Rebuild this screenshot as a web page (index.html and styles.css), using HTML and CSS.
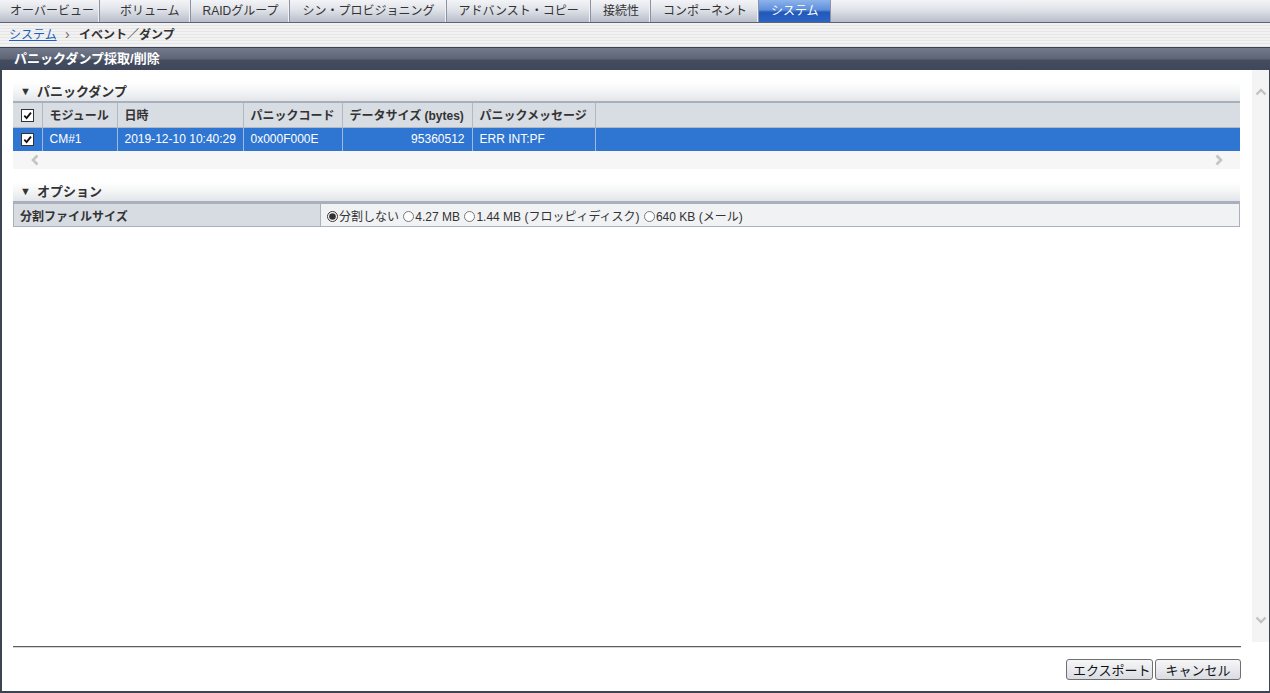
FILE: index.html
```html
<!DOCTYPE html>
<html lang="ja">
  <head>
    <meta charset="UTF-8" />
    <title>パニックダンプ採取/削除</title>
    <link rel="stylesheet" href="styles.css">
  </head>
  <body>
    <div class="tabs">
      <div class="tab">オーバービュー</div>
      <div class="tab">ボリューム</div>
      <div class="tab">RAIDグループ</div>
      <div class="tab">シン・プロビジョニング</div>
      <div class="tab">アドバンスト・コピー</div>
      <div class="tab">接続性</div>
      <div class="tab">コンポーネント</div>
      <div class="tab active">システム</div>
    </div>

    <div class="crumbs">
      <a href="#">システム</a>
      <span class="crumb-sep">›</span>
      <strong>イベント／ダンプ</strong>
    </div>

    <div class="panel">
      <div class="panel-title">パニックダンプ採取/削除</div>
      <div class="panel-body">
        <div class="scroll-area">
          <div class="content">
            <div class="section-head"><span class="tri">▼</span>パニックダンプ</div>
            <table class="dump-table">
              <colgroup>
                <col class="c-check" />
                <col class="c-module" />
                <col class="c-date" />
                <col class="c-code" />
                <col class="c-size" />
                <col class="c-msg" />
                <col />
              </colgroup>
              <thead>
                <tr>
                  <th><span class="check"><svg viewBox="0 0 12 12"><path d="M2.5 6.2 L5 8.8 L9.8 2.8" /></svg></span></th>
                  <th>モジュール</th>
                  <th>日時</th>
                  <th>パニックコード</th>
                  <th>データサイズ (bytes)</th>
                  <th>パニックメッセージ</th>
                  <th></th>
                </tr>
              </thead>
              <tbody>
                <tr class="selected">
                  <td><span class="check"><svg viewBox="0 0 12 12"><path d="M2.5 6.2 L5 8.8 L9.8 2.8" /></svg></span></td>
                  <td>CM#1</td>
                  <td>2019-12-10 10:40:29</td>
                  <td>0x000F000E</td>
                  <td class="num">95360512</td>
                  <td>ERR INT:PF</td>
                  <td></td>
                </tr>
              </tbody>
            </table>
            <div class="hscroll">
              <svg class="chev" viewBox="0 0 10 12"><path d="M7.5 1.5 L3 6 L7.5 10.5" /></svg>
              <svg class="chev" viewBox="0 0 10 12"><path d="M2.5 1.5 L7 6 L2.5 10.5" /></svg>
            </div>

            <div class="section-head option-head"><span class="tri">▼</span>オプション</div>
            <table class="opt-table">
              <tr>
                <th>分割ファイルサイズ</th>
                <td>
                  <label><input type="radio" name="split" checked />分割しない</label>
                  <label><input type="radio" name="split" />4.27 MB</label>
                  <label><input type="radio" name="split" />1.44 MB (フロッピィディスク)</label>
                  <label><input type="radio" name="split" />640 KB (メール)</label>
                </td>
              </tr>
            </table>
          </div>
          <div class="vscroll">
            <svg class="vchev" viewBox="0 0 12 10"><path d="M1.5 7.5 L6 3 L10.5 7.5" /></svg>
            <svg class="vchev" viewBox="0 0 12 10"><path d="M1.5 2.5 L6 7 L10.5 2.5" /></svg>
          </div>
        </div>
        <div class="footer">
          <div class="rule"></div>
          <div class="actions">
            <button class="btn btn-export">エクスポート</button>
            <button class="btn">キャンセル</button>
          </div>
        </div>
      </div>
    </div>
  </body>
</html>
```

FILE: styles.css
```css
* {
  margin: 0;
  padding: 0;
  box-sizing: border-box;
}

body {
  font-family: "Liberation Sans", "Noto Sans CJK JP", sans-serif;
  font-size: 12px;
  color: #333;
  background: #fff;
  height: 693px;
  display: flex;
  flex-direction: column;
  overflow: hidden;
}

/* top navigation tabs */
.tabs {
  display: flex;
  height: 23px;
  background: linear-gradient(to bottom, #f3f4f7, #dfe2e8 45%, #b8bdca);
  border-bottom: 1px solid #5d6473;
}

.tab {
  padding: 0 11px 0 12px;
  line-height: 22px;
  font-size: 12px;
  color: #333;
  border-right: 1px solid #8d93a0;
  box-shadow: inset -1px 0 0 #eef0f4;
  white-space: nowrap;
}

.tab:first-child {
  padding: 0 5px 0 10px;
}

.tab:nth-child(2) {
  padding: 0 10px 0 20px;
}

.tab.active {
  background: linear-gradient(to bottom, #8db3ea, #5d8fdb 45%, #2359b8 55%, #2a64c4);
  color: #fff;
  box-shadow: none;
  border-right: 1px solid #8d93a0;
}

/* breadcrumb */
.crumbs {
  height: 24px;
  line-height: 23px;
  padding-left: 9px;
  font-size: 12px;
  background: repeating-linear-gradient(to bottom, #f2f2f2 0, #f2f2f2 2px, #e6e6e6 2px, #e6e6e6 3px);
}

.crumbs a {
  color: #1f5fc0;
  text-decoration: underline;
}

.crumb-sep {
  color: #666;
  margin: 0 6px 0 5px;
  font-size: 14px;
}

.crumbs strong {
  color: #333;
}

/* panel */
.panel {
  flex: 1;
  display: flex;
  flex-direction: column;
  min-height: 0;
}

.panel-title {
  height: 23px;
  line-height: 22px;
  padding-left: 14px;
  color: #fff;
  font-weight: bold;
  font-size: 13px;
  border-top: 1px solid #3a4150;
  background: linear-gradient(to bottom, #727a8b, #5c6476 50%, #444c5f 55%, #3f475a);
}

.panel-body {
  flex: 1;
  display: flex;
  flex-direction: column;
  border-left: 2px solid #3c4352;
  border-right: 1px solid #3c4352;
  border-bottom: 2px solid #3c4352;
  min-height: 0;
}

.scroll-area {
  height: 572px;
  display: flex;
}

.content {
  flex: 1;
  padding: 12px 12px 0 11px;
}

.vscroll {
  width: 17px;
  background: #f4f4f4;
  display: flex;
  flex-direction: column;
  justify-content: space-between;
  align-items: center;
  padding: 17px 0 17px;
}

.vchev {
  width: 12px;
  height: 10px;
  fill: none;
  stroke: #c2c2c2;
  stroke-width: 2.4;
}

/* section headings */
.section-head {
  height: 21px;
  line-height: 19px;
  padding-left: 7px;
  font-size: 13px;
  font-weight: bold;
  color: #333;
  background: linear-gradient(to bottom, #ffffff, #f6f7f8 40%, #e3e5e9);
  border-bottom: 2px solid #a9b0bd;
}

.tri {
  font-size: 11px;
  margin-right: 6px;
  position: relative;
  top: -1px;
}

.option-head {
  margin-top: 13px;
}

/* dump table */
.dump-table {
  width: 100%;
  border-collapse: collapse;
  table-layout: fixed;
}

.c-check { width: 29px; }
.c-module { width: 75px; }
.c-date { width: 126px; }
.c-code { width: 99px; }
.c-size { width: 130px; }
.c-msg { width: 123px; }

.dump-table th {
  height: 24px;
  background: #d8dce3;
  text-align: left;
  font-weight: bold;
  padding: 0 7px;
  border-right: 1px solid #b3b9c3;
  border-bottom: 1px solid #b3b9c3;
  white-space: nowrap;
}

.dump-table td {
  height: 24px;
  padding: 0 7px;
  border-right: 1px solid #9fb9e0;
  white-space: nowrap;
}

.dump-table th:first-child,
.dump-table td:first-child {
  padding: 0 0 0 8px;
}

.dump-table th:last-child,
.dump-table td:last-child {
  border-right: none;
}

.dump-table tr.selected td {
  background: #2f75d2;
  color: #fff;
}

.dump-table td.num {
  text-align: right;
}

.check {
  display: inline-block;
  width: 13px;
  height: 13px;
  background: #fff;
  border: 1px solid #333;
  vertical-align: middle;
}

.check svg {
  display: block;
  width: 11px;
  height: 11px;
  fill: none;
  stroke: #111;
  stroke-width: 2;
}

.hscroll {
  height: 18px;
  background: #f6f6f6;
  display: flex;
  justify-content: space-between;
  align-items: center;
  padding: 0 16px 0 17px;
}

.chev {
  width: 10px;
  height: 12px;
  fill: none;
  stroke: #c4c4c4;
  stroke-width: 2.6;
}

/* options table */
.opt-table {
  width: 100%;
  border-collapse: collapse;
}

.opt-table th {
  width: 307px;
  height: 23px;
  text-align: left;
  padding: 0 6px;
  font-weight: bold;
  background: #d7dbe2;
  border: 1px solid #aab1bc;
}

.opt-table td {
  background: #f1f2f4;
  padding: 0 6px;
  border: 1px solid #aab1bc;
  white-space: nowrap;
}

.opt-table label {
  margin-right: 1px;
}

.opt-table input {
  width: 11px;
  height: 11px;
  margin: 0 1px 0 0;
  vertical-align: -1px;
  accent-color: #333;
}

/* footer */
.footer {
  flex: 1;
  padding: 4px 28px 0 11px;
}

.rule {
  height: 2px;
  border-top: 1px solid #5f5f5f;
  border-bottom: 1px solid #d4d4d4;
}

.actions {
  padding-top: 11px;
  display: flex;
  justify-content: flex-end;
  gap: 2px;
}

.btn {
  height: 21px;
  width: 86px;
  font-family: "Noto Sans CJK JP", sans-serif;
  font-size: 13px;
  color: #111;
  line-height: 19px;
  border: 1px solid #707070;
  border-radius: 3px;
  background: linear-gradient(to bottom, #f6f6f6, #e8eaee 50%, #d9dce2);
  white-space: nowrap;
  overflow: hidden;
  cursor: pointer;
}

.btn-export {
  width: 87px;
  text-align: left;
  padding-left: 6px;
}
```
